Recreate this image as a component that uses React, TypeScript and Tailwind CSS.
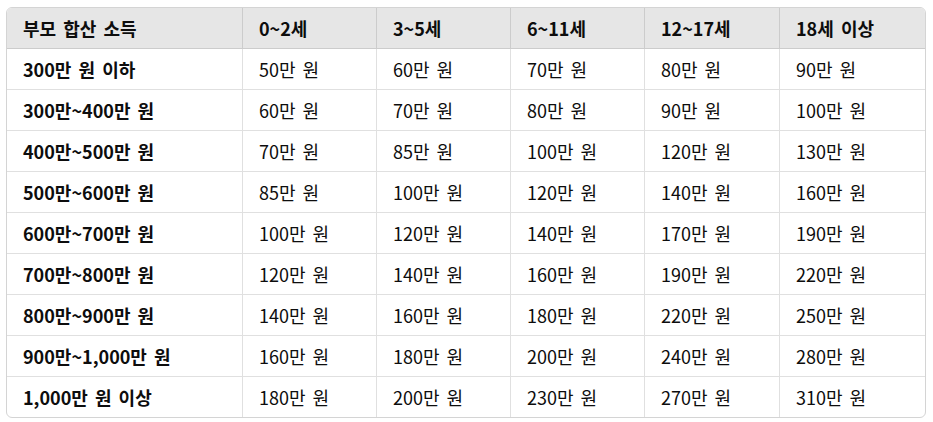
const headers = ['부모 합산 소득', '0~2세', '3~5세', '6~11세', '12~17세', '18세 이상'];

const rows: string[][] = [
  ['300만 원 이하', '50만 원', '60만 원', '70만 원', '80만 원', '90만 원'],
  ['300만~400만 원', '60만 원', '70만 원', '80만 원', '90만 원', '100만 원'],
  ['400만~500만 원', '70만 원', '85만 원', '100만 원', '120만 원', '130만 원'],
  ['500만~600만 원', '85만 원', '100만 원', '120만 원', '140만 원', '160만 원'],
  ['600만~700만 원', '100만 원', '120만 원', '140만 원', '170만 원', '190만 원'],
  ['700만~800만 원', '120만 원', '140만 원', '160만 원', '190만 원', '220만 원'],
  ['800만~900만 원', '140만 원', '160만 원', '180만 원', '220만 원', '250만 원'],
  ['900만~1,000만 원', '160만 원', '180만 원', '200만 원', '240만 원', '280만 원'],
  ['1,000만 원 이상', '180만 원', '200만 원', '230만 원', '270만 원', '310만 원'],
];

const gridCols = 'grid grid-cols-[236px_134px_134px_134px_135px_1fr]';

export default function App() {
  return (
    <div className="w-[933px] h-[422px] bg-white pt-[7px] pl-[6px] font-['Noto_Sans_CJK_KR','Noto_Sans',sans-serif] text-[18px] [word-spacing:3px] text-[#0d0d0d]">
      <div className="w-[920px] border border-[#d4d4d4] rounded-[6px] overflow-hidden">
        {/* Header */}
        <div className={`${gridCols} bg-[#e6e6e6] border-b border-[#cccccc]`}>
          {headers.map((h, i) => (
            <div
              key={h}
              className={`h-[40px] px-4 flex items-center font-bold ${
                i < headers.length - 1 ? 'border-r border-[#cccccc]' : ''
              }`}
            >
              {h}
            </div>
          ))}
        </div>

        {/* Body */}
        {rows.map((row, r) => (
          <div
            key={r}
            className={`${gridCols} ${r < rows.length - 1 ? 'border-b border-[#e0e0e0]' : ''}`}
          >
            {row.map((cell, i) => (
              <div
                key={i}
                className={`h-[40px] px-4 flex items-center whitespace-nowrap ${i === 0 ? 'font-bold' : ''} ${
                  i < row.length - 1 ? 'border-r border-[#e0e0e0]' : ''
                }`}
              >
                {cell}
              </div>
            ))}
          </div>
        ))}
      </div>
    </div>
  );
}
